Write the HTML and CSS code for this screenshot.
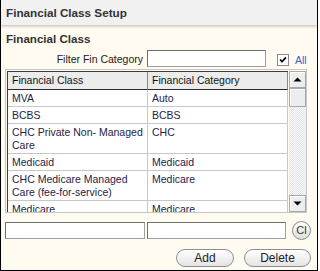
FILE: index.html
```html
<!DOCTYPE html>
<html>
<head>
<meta charset="utf-8">
<link rel="stylesheet" href="styles.css">
</head>
<body>
<div class="panel">
  <div class="titlebar"><span class="title">Financial Class Setup</span></div>
  <div class="content">
    <div class="section-title">Financial Class</div>
    <div class="filter-row">
      <span class="filter-label">Filter Fin Category</span>
      <span class="text-input filter-input"></span>
      <span class="checkbox"><svg width="12" height="12" viewBox="0 0 12 12"><path d="M2.5 5.5 L4.8 8.2 L9.5 2.8" fill="none" stroke="#000" stroke-width="2"/></svg></span>
      <span class="all-label">All</span>
    </div>
    <div class="grid-frame">
      <div class="grid">
        <div class="hcell">Financial Class</div>
        <div class="hcell">Financial Category</div>
        <div class="cell">MVA</div><div class="cell">Auto</div>
        <div class="cell">BCBS</div><div class="cell">BCBS</div>
        <div class="cell">CHC Private Non- Managed Care</div><div class="cell">CHC</div>
        <div class="cell">Medicaid</div><div class="cell">Medicaid</div>
        <div class="cell">CHC Medicare Managed Care (fee-for-service)</div><div class="cell">Medicare</div>
        <div class="cell">Medicare</div><div class="cell">Medicare</div>
      </div>
      <div class="scrollbar">
        <div class="sb-btn"><svg width="9" height="5" viewBox="0 0 9 5"><path d="M0.5 4.5 L4.5 0.5 L8.5 4.5 Z" fill="#000"/></svg></div>
        <div class="sb-thumb"></div>
        <div class="sb-track"></div>
        <div class="sb-btn"><svg width="9" height="5" viewBox="0 0 9 5"><path d="M0.5 0.5 L4.5 4.5 L8.5 0.5 Z" fill="#000"/></svg></div>
      </div>
    </div>
    <div class="edit-row">
      <span class="text-input edit-one"></span>
      <span class="text-input edit-two"></span>
      <span class="clear-btn">Cl</span>
    </div>
    <div class="button-row">
      <span class="pill pill-add">Add</span>
      <span class="pill pill-delete">Delete</span>
    </div>
  </div>
</div>
</body>
</html>
```
FILE: styles.css
```css
html, body {
  margin: 0;
  padding: 0;
  background: #ffffff;
}
.panel {
  box-sizing: border-box;
  width: 318px;
  height: 271px;
  border-left: 1px solid #000;
  border-right: 1px solid #000;
  border-bottom: 1px solid #000;
  background: #fffbf0;
  font-family: "Liberation Sans", Arial, sans-serif;
  overflow: hidden;
}
.titlebar {
  height: 25px;
  background: #f1f1f1;
  box-shadow: 0 1px 3px rgba(0, 0, 0, 0.28);
  padding-left: 5px;
  position: relative;
}
.title {
  font-weight: bold;
  font-size: 11.7px;
  line-height: 26px;
  color: #333333;
}
.content {
  padding: 0 0 0 4px;
}
.section-title {
  margin-top: 7px;
  padding-left: 1px;
  font-weight: bold;
  font-size: 11.6px;
  line-height: 14px;
  color: #333333;
}
.filter-row {
  margin-top: 4px;
  display: flex;
  align-items: center;
  height: 17px;
}
.filter-label {
  width: 138px;
  text-align: right;
  font-size: 10.5px;
  color: #222;
}
.text-input {
  box-sizing: border-box;
  display: block;
  height: 17px;
  background: #ffffff;
  border: 1px solid #6e6e6e;
  border-right-color: #a0a0a0;
  border-bottom-color: #a0a0a0;
}
.filter-input {
  width: 119px;
  margin-left: 4px;
}
.checkbox {
  box-sizing: border-box;
  width: 12px;
  height: 12px;
  margin-left: 11px;
  margin-top: 3px;
  border: 1px solid #8c8c8c;
  background: #fff;
  display: flex;
  align-items: center;
  justify-content: center;
}
.checkbox svg {
  display: block;
}
.all-label {
  margin-left: 6px;
  margin-top: 3px;
  font-size: 10.5px;
  color: #3366cc;
}
.grid-frame {
  box-sizing: border-box;
  margin-top: 2px;
  width: 302px;
  height: 144px;
  border: 1px solid #c6c6c6;
  padding: 1px 0 0 1px;
  display: flex;
  gap: 1px;
}
.grid {
  width: 281px;
  height: 141px;
  overflow: hidden;
  border-top: 1px solid #3c3c3c;
  border-left: 1px solid #3c3c3c;
  box-sizing: border-box;
  display: grid;
  grid-template-columns: 140px 140px;
  align-content: start;
  background: #ffffff;
}
.hcell {
  height: 17px;
  line-height: 17px;
  box-sizing: border-box;
  padding-left: 4px;
  font-size: 10.5px;
  color: #111;
  background: #ececec;
  border-bottom: 1px solid #2a2a2a;
  border-right: 1px solid #8a8a8a;
  height: 18px;
}
.cell {
  padding: 2px 4px 1px 4px;
  line-height: 13px;
  font-size: 10.5px;
  color: #1f2347;
  border-bottom: 1px solid #c8c8c8;
  border-right: 1px solid #c8c8c8;
  background: #ffffff;
}
.scrollbar {
  width: 17px;
  height: 141px;
  display: flex;
  flex-direction: column;
}
.sb-btn, .sb-thumb {
  box-sizing: border-box;
  height: 17px;
  background: #ededed;
  border: 1px solid #a8a8a8;
  box-shadow: inset 1px 1px 0 #ffffff;
  display: flex;
  align-items: center;
  justify-content: center;
}
.sb-btn svg {
  display: block;
}
.sb-thumb {
  height: 19px;
}
.sb-track {
  flex: 1;
  background-color: #f7f7f7;
  background-image: repeating-conic-gradient(#e4e4e4 0 25%, #fbfbfb 0 50%);
  background-size: 2px 2px;
}
.edit-row {
  margin-top: 8px;
  display: flex;
  align-items: center;
}
.edit-one {
  width: 140px;
}
.edit-two {
  width: 139px;
  margin-left: 2px;
}
.clear-btn {
  box-sizing: border-box;
  width: 19px;
  height: 19px;
  margin-left: 6px;
  border-radius: 50%;
  border: 1px solid #8a8a8a;
  background: linear-gradient(#ffffff, #dedede);
  font-size: 11px;
  line-height: 17px;
  text-align: center;
  color: #333;
}
.button-row {
  margin-top: 9px;
  display: flex;
  justify-content: flex-end;
  padding-right: 6px;
  gap: 10px;
}
.pill {
  box-sizing: border-box;
  height: 18px;
  border: 1px solid #8e8e8e;
  border-radius: 9px;
  background: linear-gradient(#ffffff, #e4e4e4);
  font-size: 12px;
  line-height: 16px;
  text-align: center;
  color: #222;
}
.pill-add {
  width: 58px;
}
.pill-delete {
  width: 67px;
}
```
